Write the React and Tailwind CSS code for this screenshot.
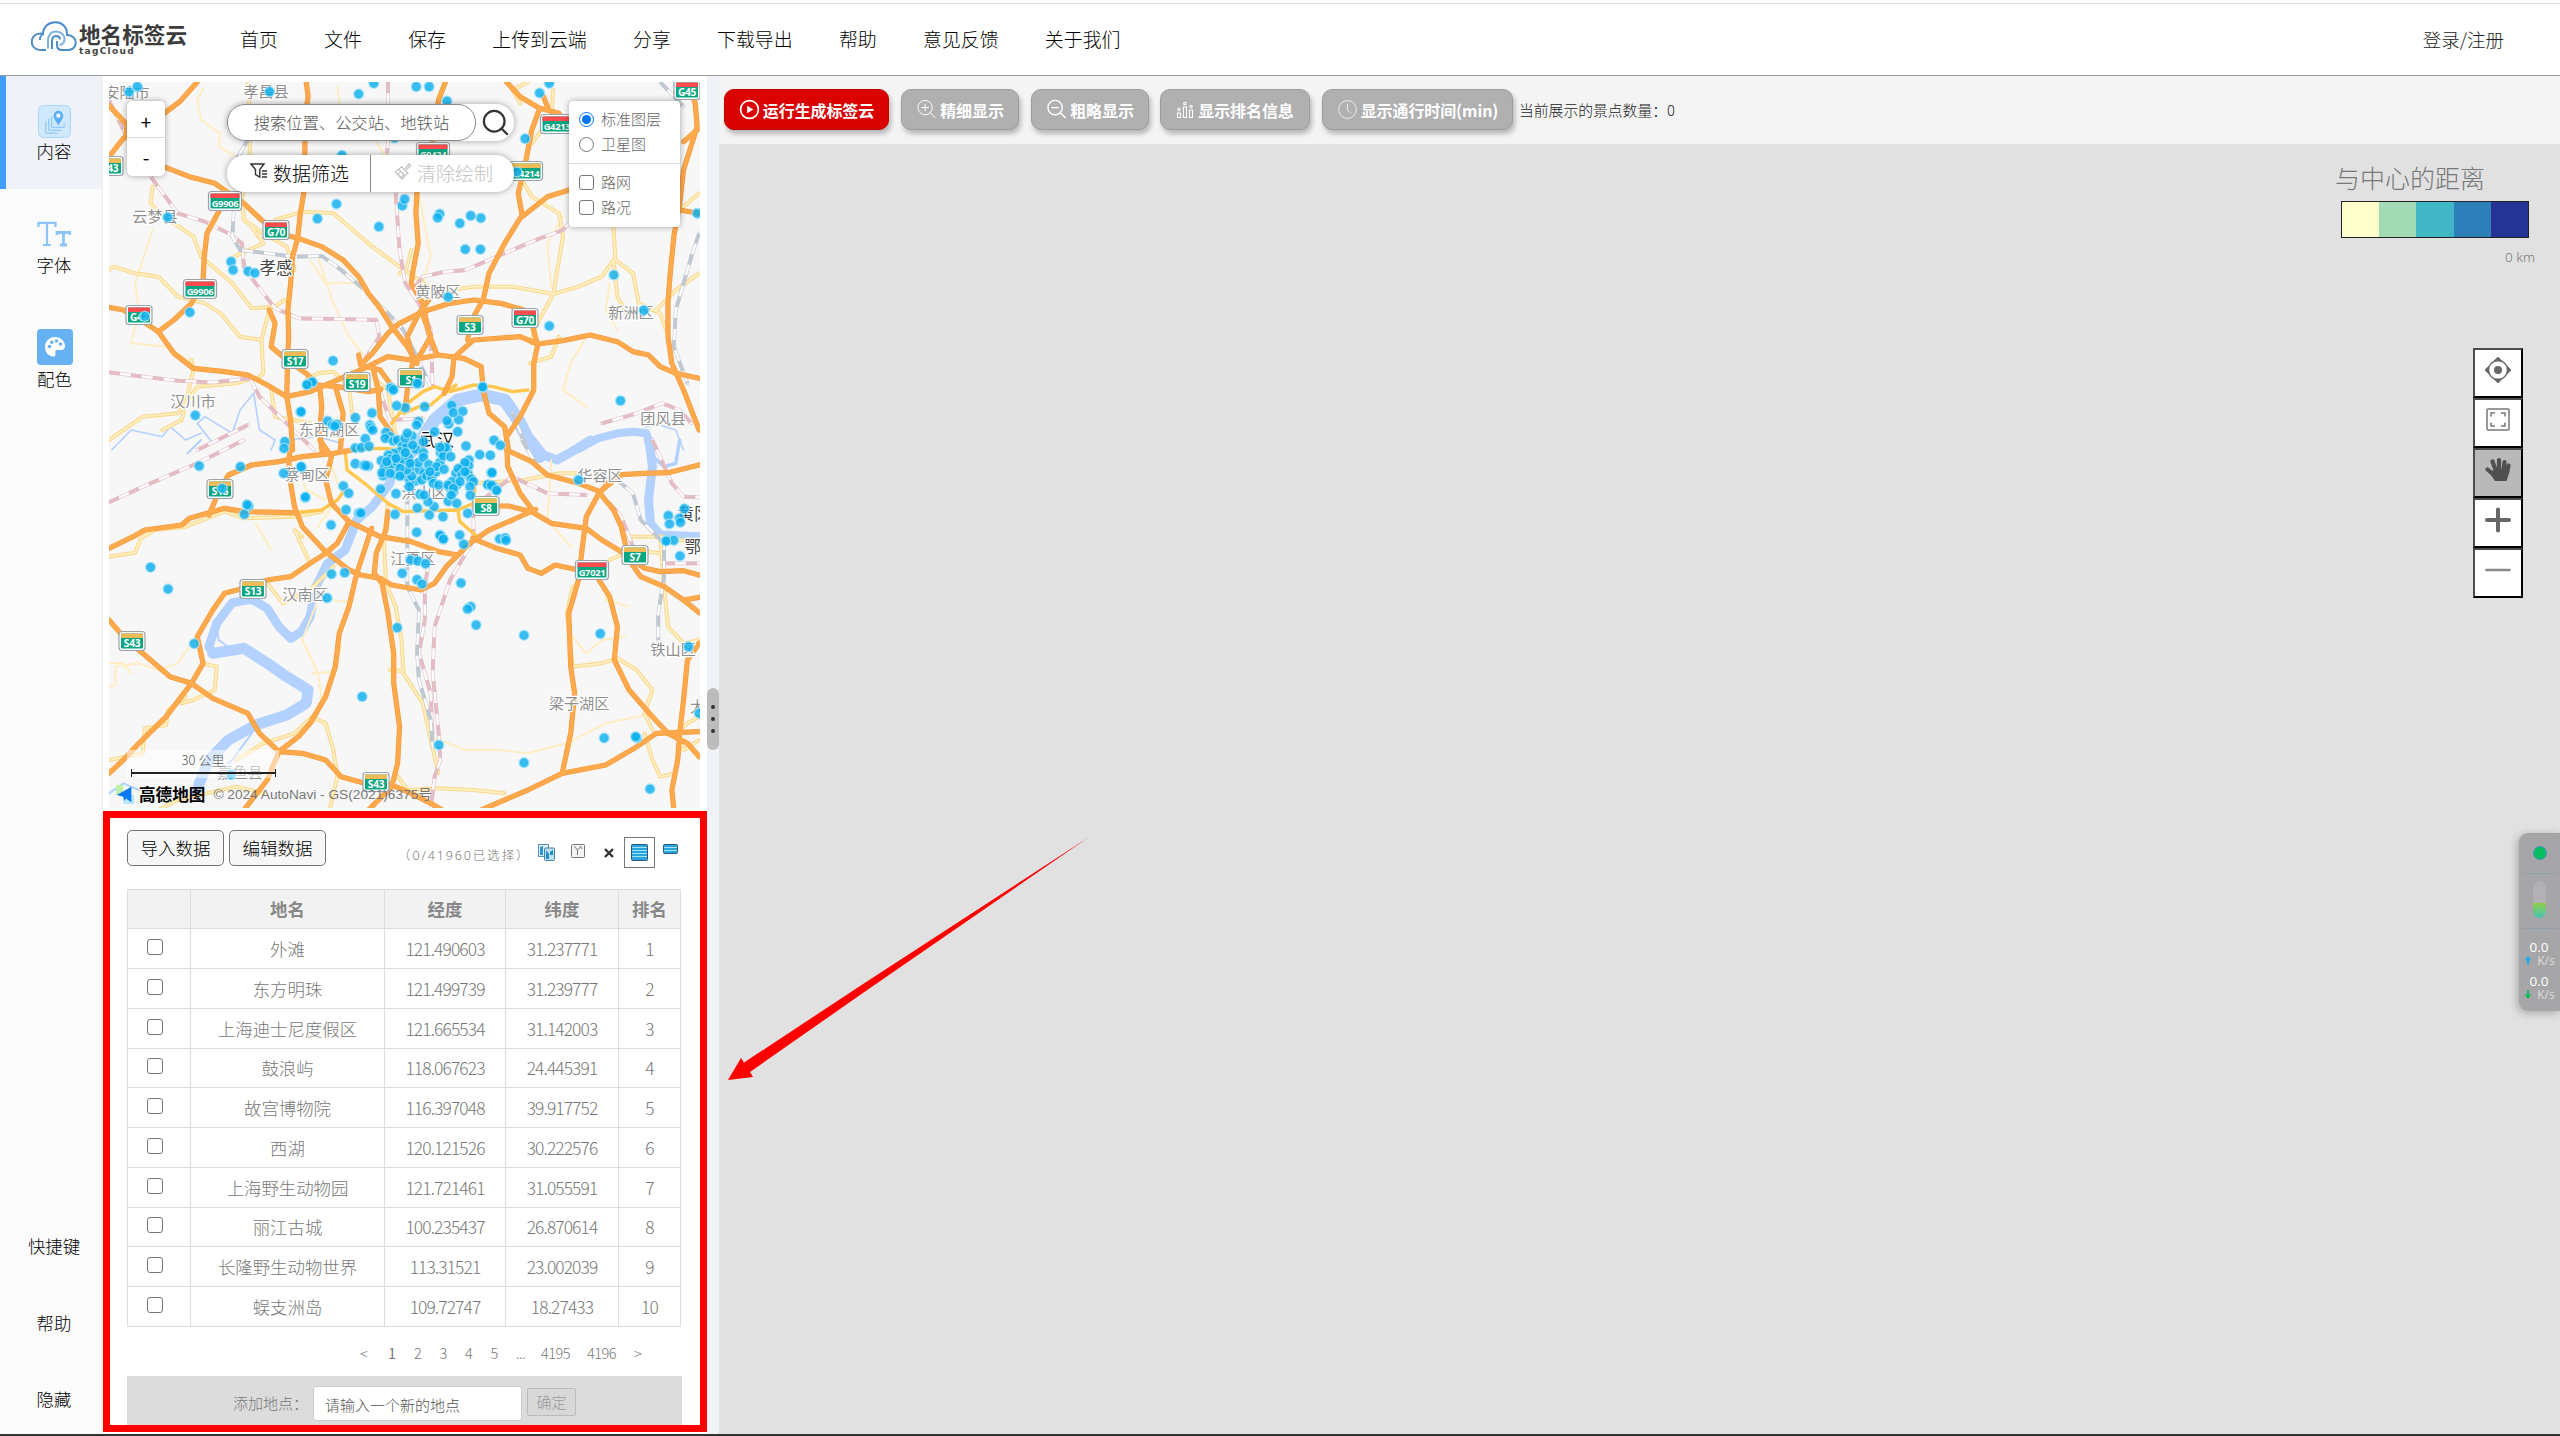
import React from "react";
import { Search } from "lucide-react";

const NORTH = "translate(100 70) scale(0.38903 0.33333)";
const SOUTH = "translate(100 440) scale(0.38903 0.33333)";

const highwaysNorth = [
  "250,36 205,95 165,130 120,180 60,205 40,235 23,262",
  "23,107 50,140 70,165 66,200",
  "168,292 230,320 295,340 370,400 415,450 465,492 510,505 570,530 625,570 665,620 690,670 720,715 750,770 790,830 815,880",
  "305,425 275,490 268,560 265,630 235,700 190,750 150,785 105,750 60,720 23,712",
  "150,785 190,850 240,895 320,905 380,915 430,945 480,980 490,1050 495,1140",
  "530,36 535,80 528,130 525,360 515,430 508,505 495,560 490,640 483,720 485,800 482,880 480,980",
  "480,980 540,965 600,935 670,900 740,860 800,870 870,855 935,865 980,890 985,960 1000,1030 1040,1070 1050,1140",
  "888,36 870,90 860,180 850,250 815,360 812,430 818,520 805,600 800,640 830,700 845,790 865,850",
  "665,855 670,885 700,850 740,790 770,760 830,725 900,700 960,690 1030,700 1090,720 1110,760 1125,825 1115,880 1115,960 1080,1040 1045,1100",
  "845,690 820,730 790,800 805,870 790,960 785,1010",
  "830,735 850,800 815,870",
  "1045,36 1080,80 1130,115 1110,180 1095,270 1075,370 1085,435 1040,520 1000,610 985,690 955,750 945,810",
  "1130,115 1180,130 1200,170",
  "1150,110 1140,80",
  "1085,440 1150,380 1206,360",
  "910,862 960,810 1080,800 1125,822 1190,812 1260,795 1330,815 1370,845 1410,855 1440,890 1480,910 1540,925",
  "1510,36 1530,100 1535,170 1500,300 1490,400 1475,500 1465,620 1460,700 1460,800 1470,880 1500,960 1530,1050 1540,1080",
  "435,720 450,760 440,830 480,870 530,910 560,945 610,950 690,965 722,958",
  "565,950 570,1010 565,1080 570,1140",
  "605,950 625,1030 618,1140",
  "700,885 715,960 720,1040 750,1090",
  "910,860 905,920 885,970",
  "1535,180 1500,215",
  "1490,420 1540,430",
  "670,885 720,900 745,940",
];
const highwaysSouth = [
  "23,325 85,290 115,270 210,255 230,235 320,205 370,215 500,218",
  "280,225 300,170 330,105 390,75 460,65 520,50 600,40 650,30",
  "493,0 485,60 490,130 500,200 520,260 580,335 640,390 670,405 720,415 750,435 825,450 860,430 890,380 950,310 1000,270 1060,240 1120,208",
  "565,0 595,50 580,120 595,190 640,245 720,290 800,305 870,335 920,345",
  "640,245 610,310 580,340 540,370 490,410 430,420 370,445 320,460 290,510 250,590 265,670 235,730 170,830 100,910 60,960 23,1000",
  "23,540 60,590 130,660 180,710 235,730 290,775 380,820 410,880 460,935 520,940 580,960 620,1010 680,1030 740,1030 800,1060 850,1090 880,1110",
  "698,265 680,330 660,400 640,500 615,580 605,680 580,770 540,850 510,890 460,935 430,1020 370,1110",
  "740,215 735,270 710,340 705,400 725,430 740,520 755,640 755,730 770,860 765,970 750,1040 690,1110",
  "1045,0 1048,80 1080,160 1115,215",
  "1045,30 1110,65 1150,105 1230,130 1285,155 1340,104 1400,100 1460,98 1540,75",
  "958,295 1020,325 1080,345 1100,385 1135,400 1170,375 1230,390",
  "970,198 1050,198 1110,215 1160,250 1250,265 1290,300 1340,335 1400,385 1440,395 1500,392 1540,405",
  "1305,130 1280,165 1250,230 1240,320 1230,420 1205,520 1210,680 1220,760 1210,880 1188,1000 1100,1050 980,1110",
  "1285,160 1320,210 1340,260 1360,360 1390,410 1450,440 1500,480 1540,518",
  "1280,415 1310,470 1330,560 1322,660 1360,750 1420,830 1460,880 1510,910 1540,950",
  "1188,1000 1300,975 1380,920 1430,880 1540,875",
  "1540,610 1510,660 1500,780 1490,880 1485,960 1470,1050 1475,1110",
  "1500,480 1540,472",
];
const arterialsNorth = [
  "750,1060 790,1000 830,965 860,950 900,965 960,945 1010,950 1060,965 1100,960",
  "780,1030 820,1010 850,1005 885,970 915,945",
];
const arterialsSouth = [
  "630,30 635,90 680,130 740,190 780,215 860,212 920,210 925,245 965,285",
  "500,218 570,210 610,180 630,150",
  "640,30 720,25 800,30",
  "920,210 960,190 965,120 930,60",
];
const minorNorth = [
  "380,36 385,120 385,250 365,390 370,450 420,490 480,530 500,600",
  "23,600 35,590 90,610 150,620 200,680 270,700 310,730 360,800 415,810 435,720 475,690",
  "135,350 130,400 165,440 240,500 260,560 340,640 390,715 440,710",
  "390,470 420,520 345,560",
  "450,450 520,425 600,430 650,480 700,530 770,590 845,650 900,660 960,650 1060,650 1110,660 1165,672 1230,650 1290,620 1320,570",
  "1165,672 1115,780 1110,820",
  "1165,672 1190,500 1180,430 1110,380 1080,320",
  "1080,100 1060,60 1100,36",
  "1165,60 1160,140 1110,220",
  "1320,470 1325,570 1370,610 1385,700 1440,730 1455,780",
  "1320,570 1330,680 1360,740",
  "1540,610 1480,660 1430,720 1400,720",
  "415,810 420,910 400,930",
  "160,1080 210,1050 240,900 235,870",
  "23,1110 110,1040 200,1030 250,950 350,940 390,925",
  "440,960 450,1040 540,1060",
  "530,930 560,910 600,905 640,950 650,1050",
  "800,540 790,590 770,610",
  "1540,370 1490,420",
  "1105,880 1160,860 1180,800",
  "710,930 740,960 760,1100",
];
const minorSouth = [
  "23,350 90,338 105,295 140,270 220,260 320,215 370,235 500,230 570,215",
  "265,670 300,680 295,750 240,780 210,790",
  "23,960 110,940 115,865 170,855 175,810 220,770",
  "350,960 420,910 500,880 545,830 580,850 600,930 610,1010 590,1110",
  "740,190 730,300 735,430 760,500 775,600 780,700 830,790 850,900 870,1000",
  "745,690 780,693",
  "760,1000 790,1050 870,1045 960,1050 1040,1060",
  "1215,440 1200,520 1215,680 1290,670 1330,655 1380,690 1420,750 1400,820 1420,870",
  "1400,880 1420,960 1440,1010 1480,1000",
  "1310,360 1370,330 1440,340",
  "1440,290 1450,440 1460,560 1500,610 1540,600",
  "960,130 1090,120 1180,100 1230,100",
  "1540,830 1510,850 1480,880 1500,930 1540,900",
  "540,370 500,270 520,290",
  "430,430 470,490 540,450 600,380",
  "1350,290 1440,290 1540,310",
  "150,1110 200,1080 350,1040 420,1060",
];
const hairNorth = [
  "265,55 250,90 260,150 310,190 305,230 380,280",
  "610,50 620,130 690,180 730,250 740,360",
  "135,480 90,640 100,720 80,820 170,830 240,880",
  "820,370 840,500 850,560 830,640",
  "540,570 580,640 665,640",
  "1190,440 1150,520 1160,650",
  "560,560 600,700 640,800 680,860",
  "1250,800 1210,880 1190,960 1250,1010",
  "1310,640 1300,720 1330,780",
];
const hairSouth = [
  "560,480 520,600 560,700 570,780 550,850",
  "23,740 40,735 40,680 100,670 150,690 200,670 240,600",
  "23,670 60,670 80,700",
  "545,700 600,695 620,620",
  "850,890 940,930 1030,930 1100,940 1200,910 1300,850 1400,825",
  "1160,60 1150,240 1210,320",
  "1215,590 1250,640 1290,600 1350,590",
  "600,480 640,488",
  "1300,440 1300,480 1360,500",
  "400,250 440,330",
  "500,50 530,150 580,180",
  "590,60 620,160 560,260",
];
const railPinkNorth = [
  "23,90 60,180 130,320 200,430 270,455 330,490 365,520 370,590 400,640 450,715 510,745 660,748 710,750 718,800 680,870",
  "23,907 110,920 200,932 290,937 385,925 410,980 480,1060 550,1140",
  "740,36 742,190 738,250",
  "760,370 770,540 785,640 820,700 850,780 855,950",
  "810,650 830,620 890,605 940,600 1000,570 1060,540 1120,510 1190,480 1230,430",
  "380,1065 250,1140",
  "710,930 745,1050 830,1045",
  "1290,1060 1380,1030 1445,1000 1490,1020 1520,1060",
];
const railPinkSouth = [
  "23,187 120,135 250,70 370,0",
  "960,300 960,200 1060,110 1150,160 1250,165",
  "965,290 900,420 860,560 855,700 870,870 875,960 860,1010 850,1110",
  "850,330 835,440 835,540 820,640 850,760 855,900",
  "1310,190 1340,230 1370,320",
  "1450,370 1540,370",
  "1420,0 1470,130 1500,170 1540,172",
];
const railGrayNorth = [
  "385,200 355,260 345,400 340,500 360,540 430,550 500,560 570,558 620,600 680,660 740,730 780,780 810,850 850,950",
  "1440,36 1500,110",
  "1540,490 1520,560 1480,720 1475,830 1510,940",
  "1060,1030 1100,1140",
];
const railGraySouth = [
  "1085,0 1120,70",
  "790,160 790,440 820,510 815,640 820,720 850,840 855,920",
  "1330,120 1370,160 1390,240 1450,310 1450,410 1435,520 1435,600",
];
const riverUpper = ["760,60 745,130 700,200 660,240 630,330 585,370 555,440 540,530 518,575 490,595 460,560 430,505 390,478 340,488 300,550 280,620 290,640"];
const riverLower = ["290,640 370,625 430,670 480,710 535,750 530,790 480,825 400,855 330,900 280,960 255,1030 250,1060"];
const riverNorth = ["780,1170 820,1120 860,1050 920,990 980,975 1040,990 1075,1050 1110,1130 1130,1160"];
const riverEast = ["1110,0 1140,45 1175,60 1220,30 1260,0", "1411,0 1420,80 1410,180 1415,250 1440,285 1540,290"];
const riverEastUpper = ["1230,1138 1280,1105 1330,1090 1370,1085 1405,1090 1415,1140"];
const riverBranch = ["1411,40 1450,80 1480,70 1490,0"];
const streamNorth = [
  "30,1140 80,1080 160,1100 180,1070 220,1110 260,1090",
  "395,970 360,1020 340,1090 270,1040 250,1060 290,1120",
  "395,970 410,1080 450,1110 440,1140",
  "480,1110 560,1100 620,1120",
  "1400,1070 1440,1065 1480,1080 1500,1140",
];
const streamSouth = ["300,560 305,600 340,630", "390,880 340,960 300,1000", "23,1060 60,1030 100,1050", "225,40 260,0"];

const Lines = ({ sheet, data, color, width, dash, opacity }) => (
  <g transform={sheet} fill="none" stroke={color} strokeWidth={width} strokeDasharray={dash} opacity={opacity} strokeLinejoin="round" strokeLinecap={dash ? "butt" : "round"}>
    {data.map((p) => (
      <polyline key={p} points={p} vectorEffect="non-scaling-stroke" />
    ))}
  </g>
);

const Rail = ({ sheet, data, color }) => (
  <>
    <Lines sheet={sheet} data={data} color={color} width={3.8} opacity={0.75} />
    <Lines sheet={sheet} data={data} color="#ffffff" width={2.2} />
    <Lines sheet={sheet} data={data} color={color} width={3.8} dash="11 11" />
  </>
);

/* ---------- Points of interest ---------- */
const dotsNorth = [
  [75, 66], [96, 50], [436, 65], [704, 40], [665, 72], [813, 50], [846, 50], [892, 93], [1155, 40], [1130, 69],
  [1093, 206], [622, 256], [757, 204], [1072, 306], [608, 402], [559, 446], [717, 470], [777, 407], [783, 388],
  [873, 432], [868, 443], [925, 460], [953, 437], [979, 444], [939, 538], [978, 538], [1535, 430], [174, 442],
  [337, 575], [342, 600], [381, 604], [398, 609], [895, 681], [1321, 615], [1398, 721], [1155, 768], [231, 727],
  [115, 739], [599, 872], [532, 944], [545, 937], [747, 953], [754, 960], [816, 942], [984, 951], [1338, 992],
  [245, 1036], [516, 1026],
];
const dotsSouth = [
  [255, 78], [361, 80], [518, 82], [517, 80], [472, 100], [475, 5], [473, 25], [314, 145], [382, 198], [378, 194], [371, 223],
  [528, 173], [594, 255], [130, 382], [175, 447], [242, 611], [584, 474], [595, 402], [629, 398], [674, 770], [764, 563],
  [777, 400], [815, 419], [828, 432], [798, 360], [817, 363], [837, 371], [928, 429], [953, 500], [945, 507], [967, 555],
  [1090, 586], [1286, 581], [1513, 620], [1296, 894], [1380, 894], [1377, 890], [1090, 968], [871, 915], [1414, 1047],
  [1540, 820], [1230, 120], [1502, 206], [1461, 227], [1490, 235], [1492, 247], [1464, 252], [1459, 301], [1475, 301],
  [1455, 303], [1491, 348], [337, 1004], [1006, 98], [1000, 135], [1010, 137], [1018, 150], [875, 285], [882, 298],
];
const dotsCity = [
  [33, 125], [67, 36], [51, 44], [303, 54], [310, 59], [382, 40], [578, 51], [404, 110], [346, 113], [320, 107], [485, 106],
  [518, 124], [506, 149], [476, 162], [471, 152], [490, 128], [503, 185], [385, 155], [246, 129], [196, 143], [113, 153],
  [127, 165], [140, 163], [134, 168], [240, 165], [243, 173], [248, 180], [226, 206], [196, 234], [214, 233], [237, 229],
  [196, 281], [222, 286], [235, 288], [228, 287], [434, 185], [366, 198], [400, 215], [288, 187], [300, 200], [286, 205],
  [310, 213], [322, 210], [337, 228], [350, 230], [345, 205], [380, 165], [352, 190], [378, 238], [400, 248], [330, 245],
  [312, 250], [295, 255], [301, 267], [274, 272], [284, 290], [305, 283], [322, 278], [340, 268], [355, 262], [279, 317],
  [276, 308], [315, 313], [344, 317], [368, 290], [388, 300], [385, 278], [400, 262], [402, 310], [416, 284], [376, 333],
  [360, 335], [358, 350], [395, 330], [410, 318], [425, 323], [438, 306], [450, 277], [452, 249], [470, 237], [460, 258],
  [482, 260], [440, 290], [462, 298], [430, 340], [446, 345], [420, 305], [365, 318], [350, 300], [330, 295], [360, 280],
  [528, 228], [612, 211], [631, 226], [569, 254], [601, 256], [606, 308], [537, 270], [520, 288], [536, 287], [525, 278],
  [498, 310], [505, 296], [515, 315], [534, 312], [543, 327], [550, 335], [540, 350], [500, 345], [486, 335], [490, 365],
  [478, 352], [474, 345], [510, 335], [525, 305], [541, 376], [475, 394], [500, 400], [432, 410], [414, 395], [390, 373],
  [382, 414], [418, 435], [459, 440], [533, 430], [402, 375], [272, 357], [318, 371], [315, 433], [160, 348], [176, 370],
  [168, 419], [207, 429], [213, 429], [46, 381], [380, 487], [450, 496], [460, 507], [509, 495], [521, 523], [629, 507],
  [646, 504], [648, 511], [593, 344], [604, 346], [620, 361], [490, 355], [466, 232], [450, 232], [330, 318], [318, 265],
  [290, 275], [300, 310], [346, 248], [368, 225], [484, 375],
];
const dots = [
  ...dotsNorth.map(([x, y]) => [100 + x * 0.389, 70 + y / 3]),
  ...dotsSouth.map(([x, y]) => [100 + x * 0.389, 440 + y / 3]),
  ...dotsCity.map(([x, y]) => [290 + x / 3, 370 + y / 3]),
];

const shields = [
  ["G45", 687, 90, "g"], ["G4213", 557, 124, "g"], ["G0424", 433, 152, "g"], ["S43", 110, 166, "s"], ["G4214", 526, 171, "s"],
  ["G9906", 225, 201, "g"], ["G70", 276, 230, "g"], ["G9906", 200, 289, "g"], ["G42", 139, 315, "g"], ["S3", 470, 325, "s"],
  ["G70", 525, 318, "g"], ["S17", 295, 359, "s"], ["S19", 357, 382, "s"], ["S1", 411, 378, "s"], ["S15", 220, 489, "s"],
  ["S8", 486, 506, "s"], ["S7", 635, 555, "s"], ["G7021", 592, 570, "g"], ["S13", 253, 589, "s"], ["S43", 132, 641, "s"],
  ["S43", 376, 782, "s"],
];
const places = [
  ["安陆市", 127, 92], ["孝昌县", 266, 91], ["云梦县", 155, 216], ["孝感", 276, 268, 1], ["黄陂区", 438, 291], ["新洲区", 631, 312],
  ["汉川市", 193, 401], ["东西湖区", 329, 429], ["团风县", 663, 418], ["武汉", 437, 440, 2], ["蔡甸区", 307, 474], ["华容区", 600, 475],
  ["洪山区", 424, 492], ["江夏区", 413, 558], ["汉南区", 305, 594], ["黄冈", 694, 514, 1], ["鄂州", 701, 547, 1], ["铁山区", 673, 649],
  ["梁子湖区", 579, 703], ["大冶", 705, 706], ["嘉鱼县", 240, 772],
];

const MapDrawing = () => (
  <svg viewBox="109 82 591 726" className="block h-full w-full">
    <rect x="109" y="82" width="591" height="726" fill="#f7f7f7" />
    <Lines sheet={SOUTH} data={riverUpper} color="#b3d1ff" width={9} />
    <Lines sheet={SOUTH} data={riverLower} color="#b3d1ff" width={11} />
    <Lines sheet={NORTH} data={riverNorth} color="#b3d1ff" width={13} />
    <Lines sheet={SOUTH} data={riverEast} color="#b3d1ff" width={9} />
    <Lines sheet={NORTH} data={riverEastUpper} color="#b3d1ff" width={8} />
    <Lines sheet={SOUTH} data={riverBranch} color="#b3d1ff" width={3.5} />
    <Lines sheet={NORTH} data={streamNorth} color="#b3d1ff" width={1.6} />
    <Lines sheet={SOUTH} data={streamSouth} color="#b3d1ff" width={2} />
    <Lines sheet={NORTH} data={hairNorth} color="#ffeec2" width={2} />
    <Lines sheet={SOUTH} data={hairSouth} color="#ffeec2" width={2} />
    <Lines sheet={NORTH} data={minorNorth} color="#fcd98d" width={4} />
    <Lines sheet={SOUTH} data={minorSouth} color="#fcd98d" width={4} />
    <Lines sheet={NORTH} data={minorNorth} color="#fdf0c4" width={1.8} />
    <Lines sheet={SOUTH} data={minorSouth} color="#fdf0c4" width={1.8} />
    <Rail sheet={NORTH} data={railPinkNorth} color="#e3bcc4" />
    <Rail sheet={SOUTH} data={railPinkSouth} color="#e3bcc4" />
    <Rail sheet={NORTH} data={railGrayNorth} color="#c0c8d2" />
    <Rail sheet={SOUTH} data={railGraySouth} color="#c0c8d2" />
    <Lines sheet={NORTH} data={arterialsNorth} color="#ffc74d" width={3.4} />
    <Lines sheet={SOUTH} data={arterialsSouth} color="#ffc74d" width={3.4} />
    <Lines sheet={NORTH} data={highwaysNorth} color="#f39a3a" width={5.2} />
    <Lines sheet={SOUTH} data={highwaysSouth} color="#f39a3a" width={5.2} />
    <Lines sheet={NORTH} data={highwaysNorth} color="#ffa94d" width={4} />
    <Lines sheet={SOUTH} data={highwaysSouth} color="#ffa94d" width={4} />
    {places.map(([name, x, y, rank]) => (
      <text key={name} x={x} y={y + 5.5} textAnchor="middle" fontSize={rank === 2 ? 17 : rank ? 16.5 : 15.2} fill={rank === 2 ? "#111" : rank ? "#444" : "#8f8f8f"} stroke="#fff" strokeWidth="2.4" paintOrder="stroke">
        {name}
      </text>
    ))}
    {shields.map(([name, x, y, kind]) => {
      const w = name.length > 4 ? 31 : name.length > 3 ? 28 : 24;
      return (
        <g key={name + x}>
          <rect x={x - w / 2 - 1} y={y - 9.5} width={w + 2} height={19} rx="3" fill="#fff" stroke="#9aa3ab" strokeWidth="1.2" />
          <rect x={x - w / 2 + 1} y={y - 7.5} width={w - 2} height={15} rx="1" fill="#0aa581" />
          <rect x={x - w / 2 + 1} y={y - 7.5} width={w - 2} height={4.5} fill={kind === "g" ? "#fc4b4f" : "#efbb57"} />
          <text x={x} y={y + 6} textAnchor="middle" fontSize={name.length > 4 ? 9.4 : 10.2} fontWeight="700" fill="#fff" fontFamily="Noto Sans" letterSpacing="-0.3">
            {name}
          </text>
        </g>
      );
    })}
    {dots.map(([x, y], i) => (
      <circle key={i} cx={x} cy={y} r="5" fill="#0baeee" fillOpacity="0.82" stroke="#a5e2fa" strokeOpacity="0.8" strokeWidth="1.3" />
    ))}
  </svg>
);

/* ---------- Header ---------- */
const menu = ["首页", "文件", "保存", "上传到云端", "分享", "下载导出", "帮助", "意见反馈", "关于我们"];

const Logo = () => (
  <div className="flex h-[40px] w-[158px] items-start">
    <svg viewBox="0 0 46 32" className="mt-[1px] h-[32px] w-[46px] shrink-0" fill="none" stroke="#4d8ccb" strokeWidth="2">
      <path d="M15 29H9A8.200 8.200 0 0 1 9 12.500C10 12.400 11 12.600 12 13C12 5.500 18 1.200 24.500 1.200C31 1.200 36 6 36 12.500V14C41 14 44.800 17.500 44.800 21.500C44.800 26 41.500 29 37 29H31C28 29 26 27 26 24V20" />
      <path d="M17 27.500V20.500C17 14 20 10.500 25 10.500C30 10.500 33.500 14 33.500 18C33.500 21 31.500 24 28.500 24" stroke="#7fb0e4" />
      <path d="M12 13C9.500 14.500 8.800 17 9 19M21 28V21C21 17 22.500 15 25 15C27.500 15 29 16.500 29 18.500" />
    </svg>
    <div className="ml-[2px] flex flex-col">
      <span className="text-[21.600px] font-bold leading-[27px] whitespace-nowrap text-[#3c3c3c]">地名标签云</span>
      <span className="-mt-[1px] font-['DejaVu_Sans'] text-[9px] font-bold leading-[10px] tracking-[1.300px] text-[#444]">tagCloud</span>
    </div>
  </div>
);

const Header = () => (
  <header className="mt-[3px] flex h-[73px] shrink-0 items-center border-t border-b border-t-[#ddd] border-b-[#999] bg-white pl-[31px]">
    <Logo />
    <nav className="ml-[51px] flex gap-[46.300px] text-[18.900px] font-light text-black">
      {menu.map((m) => (
        <span key={m} className="whitespace-nowrap">{m}</span>
      ))}
    </nav>
    <span className="mr-[56px] ml-auto text-[18.500px] font-light text-[#222]">登录/注册</span>
  </header>
);

/* ---------- Sidebar ---------- */
const ContentIcon = () => (
  <svg viewBox="0 0 34 34" className="h-[33px] w-[35px]">
    <rect x="0.500" y="0.500" width="33" height="33" rx="5" fill="#cfe8fc" stroke="#a9d5fa" />
    <path d="M8 17V29H20M11 14V26H24M14 12V23H27V19" stroke="#82c1f8" strokeWidth="1" fill="none" />
    <path d="M21 21C18 16 16 14 16 11A5 5 0 0 1 26 11C26 14 24 16 21 21Z" fill="#5db0f6" />
    <circle cx="21" cy="11" r="2.200" fill="#fff" />
  </svg>
);
const PaletteIcon = () => (
  <svg viewBox="0 0 36 36" className="h-[36px] w-[36px]">
    <rect width="36" height="36" rx="4" fill="#66b1f1" />
    <path d="M18 8C12 8 8 12.500 8 18C8 23 11.500 27.500 16.500 27.500C19 27.500 18.500 25 18.300 23.500C18 21.500 20 20.500 22 21C25 21.500 28 20.500 28 17C28 12 23.500 8 18 8Z" fill="#fff" />
    <g fill="#66b1f1">
      <circle cx="12.500" cy="17.500" r="1.700" /><circle cx="14.800" cy="13.200" r="1.700" /><circle cx="19.500" cy="12" r="1.700" /><circle cx="23.500" cy="15" r="1.700" />
    </g>
  </svg>
);
const TextIcon = () => (
  <svg viewBox="0 0 34 26" className="h-[26px] w-[34px]" fill="none" stroke="#8cc5f8" strokeWidth="2.200">
    <path d="M1.500 6V1.800H18.500V6M10 2V24M6 24H14" />
    <path d="M20 14V11.500H33V14M26.500 11.500V24M23 24H30" strokeWidth="2.800" />
  </svg>
);

const Sidebar = () => (
  <aside className="flex w-[103px] shrink-0 flex-col border-r border-[#eee] bg-[#fbfbfc] text-[17.400px] font-light text-black">
    <div className="flex h-[113px] flex-col items-center border-l-[6px] border-[#409eff] bg-[#eff2f7] pt-[29px]">
      <ContentIcon />
      <span className="leading-[26px]">内容</span>
    </div>
    <div className="flex h-[113px] flex-col items-center pt-[32px] pl-[6px]">
      <TextIcon />
      <span className="mt-[5px] leading-[26px]">字体</span>
    </div>
    <div className="flex h-[113px] flex-col items-center pt-[27px] pl-[7px]">
      <PaletteIcon />
      <span className="mt-[1px] leading-[26px]">配色</span>
    </div>
    <div className="mt-auto flex flex-col items-center gap-[50.500px] pb-[22px] pl-[6px] leading-[26px]">
      <span>快捷键</span>
      <span>帮助</span>
      <span>隐藏</span>
    </div>
  </aside>
);

/* ---------- Map panel ---------- */
const FunnelIcon = () => (
  <svg viewBox="0 0 18 16" className="h-[16px] w-[18px] -translate-y-[3px]" fill="none" stroke="#333" strokeWidth="1.400">
    <path d="M1 1H14L9.800 6.500V14L5.500 11.500V6.500Z" />
    <path d="M12 8H17M12 11H17M12 14H17" />
  </svg>
);
const BrushIcon = () => (
  <svg viewBox="0 0 18 18" className="h-[17px] w-[18px] -translate-y-[2px]" fill="none" stroke="#c4c4c4" strokeWidth="1.400">
    <path d="M11 6L15.500 1L17 2.500L12.500 7.500M7.500 4L14 10.500L8 17L1 9.500ZM5 7L11 13.500M4 12L6 10M7 15L9 13" />
  </svg>
);
const Box = () => <span className="block h-[15px] w-[15px] rounded-[3px] border-[1.500px] border-[#767676] bg-white" />;

const MapPanel = () => (
  <section className="relative ml-[6px] h-[726px] w-[591px] overflow-hidden">
    <MapDrawing />
    <div className="absolute top-[19px] left-[18px] flex h-[75px] w-[38px] flex-col rounded-[5px] bg-white text-center text-[19px] leading-[37px] text-black shadow-[0_0_6px_rgba(0,0,0,.35)]">
      <span className="h-[37px] border-b border-[#ddd] pt-[2px]">+</span>
      <span className="h-[37px]">-</span>
    </div>
    <div className="absolute top-[22px] left-[118px] flex h-[37px] w-[287px] rounded-[18px] bg-white shadow-[0_0_6px_rgba(0,0,0,.35)]">
      <div className="flex w-[249px] items-center justify-center rounded-[18px] border-[1.500px] border-[#888] text-[16.300px] font-light whitespace-nowrap text-[#555]">搜索位置、公交站、地铁站</div>
      <Search className="mt-[3px] ml-[4px] h-[31px] w-[31px] text-[#333]" strokeWidth={1.700} />
    </div>
    <div className="absolute top-[73px] left-[118px] flex h-[37px] w-[287px] rounded-[18px] bg-white text-[19px] font-light whitespace-nowrap shadow-[0_0_6px_rgba(0,0,0,.35)]">
      <div className="flex w-[144px] items-center justify-center gap-[5px] border-r border-[#888] pl-[2px] text-black"><FunnelIcon />数据筛选</div>
      <div className="flex flex-1 items-center justify-center gap-[5px] pl-[2px] text-[#c4c4c4]"><BrushIcon />清除绘制</div>
    </div>
    <div className="absolute top-[19px] left-[460px] flex h-[126px] w-[111px] flex-col rounded-[4px] bg-white text-[15px] font-light text-[#666] shadow-[0_0_6px_rgba(0,0,0,.35)]">
      <div className="flex h-[63px] flex-col border-b border-[#ddd] pt-[6px] pl-[10px]">
        <div className="flex h-[25px] items-center gap-[7px]">
          <span className="flex h-[15px] w-[15px] items-center justify-center rounded-full border-[1.500px] border-[#0075ff] bg-white"><span className="h-[9px] w-[9px] rounded-full bg-[#0075ff]" /></span>标准图层
        </div>
        <div className="flex h-[25px] items-center gap-[7px]"><span className="h-[15px] w-[15px] rounded-full border-[1.500px] border-[#767676]" />卫星图</div>
      </div>
      <div className="flex flex-col pt-[6px] pl-[10px]">
        <div className="flex h-[25px] items-center gap-[7px]"><Box />路网</div>
        <div className="flex h-[25px] items-center gap-[7px]"><Box />路况</div>
      </div>
    </div>
    <div className="absolute top-[668px] left-[18px] h-[28px] w-[152px] bg-white/50">
      <div className="pt-[1px] text-center text-[13px] leading-[18px] font-light text-[#555]">30 公里</div>
      <div className="mx-auto flex h-[8px] w-[145px] items-center border-x border-[#222]"><span className="h-[2px] w-full bg-[#222]" /></div>
    </div>
    <div className="absolute top-[701px] left-[6px] flex items-center whitespace-nowrap">
      <svg viewBox="0 0 20 22" className="h-[20px] w-[20px]">
        <path d="M0 1H8V12H0Z" fill="#bff0a5" /><path d="M10 12H20V22H8Z" fill="#b5e6fb" />
        <path d="M1 12L17 3V20L11 16L9 19L8 14Z" fill="#0a79f5" />
      </svg>
      <span className="ml-[4px] text-[16.600px] leading-[20px] font-bold text-black">高德地图</span>
      <span className="ml-[8px] pt-[2px] font-['Liberation_Sans','Noto_Sans_CJK_SC'] text-[13.700px] leading-[20px] text-[#777]">© 2024 AutoNavi - GS(2021)6375号</span>
    </div>
  </section>
);

/* ---------- Data panel ---------- */
const rows = [
  ["外滩", "121.490603", "31.237771"],
  ["东方明珠", "121.499739", "31.239777"],
  ["上海迪士尼度假区", "121.665534", "31.142003"],
  ["鼓浪屿", "118.067623", "24.445391"],
  ["故宫博物院", "116.397048", "39.917752"],
  ["西湖", "120.121526", "30.222576"],
  ["上海野生动物园", "121.721461", "31.055591"],
  ["丽江古城", "100.235437", "26.870614"],
  ["长隆野生动物世界", "113.31521", "23.002039"],
  ["蜈支洲岛", "109.72747", "18.27433"],
];

const TableIcon = ({ small }) => (
  <svg viewBox={small ? "0 0 15 10" : "0 0 17 17"} className={small ? "h-[10px] w-[15px]" : "h-[17px] w-[17px]"}>
    <rect x="0.500" y="0.500" width={small ? 14 : 16} height={small ? 9 : 16} rx="1" fill="#27a6dc" stroke="#2b587c" />
    <path d={small ? "M1 3.500H14M1 6.500H14" : "M1 3.500H16M1 6.500H16M1 9.500H16M1 12.500H16"} stroke="#a5e2f6" />
  </svg>
);
const CopyIcon = () => (
  <svg viewBox="0 0 17 17" className="h-[17px] w-[17px]">
    <rect x="0.500" y="0.500" width="10" height="12" fill="#dff1fb" stroke="#5b8fb5" />
    <path d="M2 3L5 2V11H2Z" fill="#2a95d0" />
    <rect x="6.500" y="4" width="10" height="12.500" rx="1" fill="#bfe3f5" stroke="#4a7fa7" />
    <path d="M8 6L11 10V15H8ZM12 8L15 6V11H12Z" fill="#1f8ecb" />
  </svg>
);
const InvertIcon = () => (
  <svg viewBox="0 0 14 14" className="h-[14px] w-[14px]" fill="none" stroke="#777">
    <rect x="0.500" y="0.500" width="13" height="13" rx="1" fill="#f4f4f4" />
    <path d="M3 2L6.500 6L10 2.500M6.500 6V11M9 2L11 5" />
  </svg>
);

const DataPanel = () => (
  <section className="mt-[3px] flex h-[621px] w-[604px] flex-col overflow-hidden border-[7px] border-[#ff0000] bg-white pl-[17px] font-light">
    <div className="flex h-[71px] items-start gap-[5px] pt-[12px]">
      {["导入数据", "编辑数据"].map((t) => (
        <button key={t} className="flex h-[36px] w-[97px] shrink-0 items-center justify-center rounded-[5px] border border-[#767676] bg-[#f7f7f7] text-[17.500px] font-light text-black">{t}</button>
      ))}
      <span className="mt-[16px] ml-[67px] w-[128px] shrink-0 text-center font-['Noto_Sans','Noto_Sans_CJK_SC'] text-[12.500px] leading-[20px] tracking-[1.900px] whitespace-nowrap text-[#777]">（0/41960已选择）</span>
      <div className="ml-[-5px] flex shrink-0">
        <span className="mt-[14px] ml-[12px]"><CopyIcon /></span>
        <span className="mt-[14px] ml-[16px]"><InvertIcon /></span>
        <svg viewBox="0 0 10 10" className="mt-[18px] ml-[19px] h-[10px] w-[10px]" stroke="#333" strokeWidth="2.400"><path d="M1 1L9 9M9 1L1 9" /></svg>
        <span className="mt-[7px] ml-[10px] flex h-[31px] w-[31px] items-center justify-center border border-[#777]"><TableIcon /></span>
        <span className="mt-[14px] ml-[8px]"><TableIcon small /></span>
      </div>
    </div>
    <table className="w-[553px] table-fixed border-collapse text-center text-[17.400px] text-[#777] [&_td]:border [&_td]:border-[#ddd] [&_th]:border [&_th]:border-[#ddd]">
      <colgroup><col className="w-[63px]" /><col className="w-[194px]" /><col className="w-[121px]" /><col className="w-[113px]" /><col className="w-[62px]" /></colgroup>
      <thead>
        <tr className="h-[39px] bg-[#f2f2f2] text-[#888]"><th /><th>地名</th><th>经度</th><th>纬度</th><th>排名</th></tr>
      </thead>
      <tbody>
        {rows.map(([name, lng, lat], i) => (
          <tr key={name} className={i === 3 || i === 7 ? "h-[39px] leading-[24px]" : "h-[40px] leading-[24px]"}>
            <td><span className="-mt-[4px] ml-[19px] block h-[16px] w-[16px] rounded-[3px] border-[1.500px] border-[#767676]" /></td>
            <td className="whitespace-nowrap">{name}</td>
            <td className="tracking-[-0.900px]">{lng}</td>
            <td className="tracking-[-0.900px]">{lat}</td>
            <td className="tracking-[-0.900px]">{i + 1}</td>
          </tr>
        ))}
      </tbody>
    </table>
    <div className="mt-[14px] flex h-[24px] w-[553px] items-center pl-[233px] text-[14.500px] tracking-[-0.500px] text-[#777]">
      <span className="w-[28px]">&lt;</span>
      <b className="w-[26px]">1</b>
      {["2", "3", "4", "5"].map((n) => <span key={n} className="w-[25.500px]">{n}</span>)}
      <span className="w-[25px]">...</span>
      <span className="w-[46px]">4195</span>
      <span className="w-[47px]">4196</span>
      <span>&gt;</span>
    </div>
    <div className="mt-auto flex h-[49px] w-[555px] shrink-0 items-start bg-[#dcdcdc] pt-[10px] text-[15px] text-[#777]">
      <span className="ml-[106px] w-[80px] leading-[34px] whitespace-nowrap">添加地点：</span>
      <div className="h-[35px] w-[209px] rounded-[3px] border border-[#ccc] bg-white pl-[11px] leading-[35px] text-[#555]">请输入一个新的地点</div>
      <button className="mt-[2px] ml-[5px] h-[28px] w-[49px] rounded-[2px] border border-[#bbb] bg-[#d8d8d8] font-light text-[#999]">确定</button>
    </div>
  </section>
);

/* ---------- Workspace ---------- */
const ZoomGlyph = ({ plus }) => (
  <svg viewBox="0 0 22 22" className="h-[21px] w-[22px]" fill="none" stroke="#fff" strokeWidth={plus ? 1 : 1.400}>
    <circle cx="9" cy="9" r="7.500" /><path d={plus ? "M5 9H13M9 5V13M14.500 14.500L20 20" : "M5 9H13M14.500 14.500L20 20"} />
  </svg>
);
const PlayGlyph = () => (
  <svg viewBox="0 0 22 22" className="h-[21px] w-[21px]" fill="none" stroke="#fff" strokeWidth="1.800">
    <circle cx="11" cy="11" r="9.300" /><path d="M8.500 7L15 11L8.500 15Z" fill="#fff" stroke="none" />
  </svg>
);
const BarsGlyph = () => (
  <svg viewBox="0 0 18 18" className="h-[18px] w-[18px]" fill="none" stroke="#fff" strokeWidth="1.100">
    <path d="M1.500 12H4.500V16.500H1.500ZM7.500 6H10.500V16.500H7.500ZM13.500 9H16.500V16.500H13.500Z" /><circle cx="9" cy="2.500" r="1.300" /><circle cx="15" cy="5.500" r="1.200" /><circle cx="3" cy="8.500" r="1.200" />
  </svg>
);
const ClockGlyph = () => (
  <svg viewBox="0 0 22 22" className="h-[21px] w-[21px]" fill="none" stroke="#eee" strokeWidth="1">
    <circle cx="11" cy="11" r="9.300" /><path d="M11 5V11.500L14.500 15" />
  </svg>
);
const actions = [
  [<PlayGlyph />, "运行生成标签云", "w-[165px] mr-[12px] bg-[#db0202] border-[#c00000] gap-[3px]"],
  [<ZoomGlyph plus />, "精细显示", "w-[118px] mr-[12px] bg-[#b0b0b0] border-[#9c9c9c] gap-[2px]"],
  [<ZoomGlyph />, "粗略显示", "w-[118px] mr-[11px] bg-[#b0b0b0] border-[#9c9c9c] gap-[2px]"],
  [<BarsGlyph />, "显示排名信息", "w-[150px] mr-[12px] bg-[#b0b0b0] border-[#9c9c9c] gap-[4px]"],
  [<ClockGlyph />, "显示通行时间(min)", "w-[191px] mr-[6px] bg-[#b0b0b0] border-[#9c9c9c] gap-[3px]"],
];

const toolGlyphs = [
  <g key="a" fill="none" stroke="#666" strokeWidth="1.300"><circle cx="13" cy="13" r="9.500" /><circle cx="13" cy="13" r="4" fill="#666" stroke="none" /><path d="M10 3.500L13 .5L16 3.500ZM10 22.500L13 25.500L16 22.500ZM3.500 10L.5 13L3.500 16ZM22.500 10L25.500 13L22.500 16Z" fill="#666" /></g>,
  <g key="b" fill="none" stroke="#777" strokeWidth="1.500"><rect x="2" y="2" width="22" height="21" rx="1" /><path d="M6 9.500V6H10M16 6H20V9.500M20 15.500V19H16M10 19H6V15.500" /></g>,
  <g key="c" fill="#505050" stroke="#505050" strokeLinecap="round"><path d="M9 13L24 10.500C24 17 23 20 21.500 24H10C8 21 6 18 4 15Z" stroke="none" /><path d="M2.500 12.500L9 18M7.500 4.500L10.500 13M14 3V12M19.500 5L18.500 13M23.500 8.500L22 16" strokeWidth="4.200" /></g>,
  <path key="d" d="M2 13H24M13 2.500V23.500" stroke="#666" strokeWidth="4" strokeLinecap="round" />,
  <path key="e" d="M1.500 13H24.500" stroke="#888" strokeWidth="2.600" strokeLinecap="round" />,
];

const Speed = ({ up }) => (
  <div className="flex flex-col items-center leading-none text-white">
    <span className="pr-[1px] font-['Open_Sans'] text-[13.500px] leading-[14px]">0.0</span>
    <span className="flex h-[13px] items-center gap-[5px] font-['Open_Sans'] text-[12px] text-[#ddd]">
      <svg viewBox="0 0 8 10" className="h-[9px] w-[8px]" fill={up ? "#1ea7f2" : "#0dbb5f"}>
        {up ? <path d="M4 0L8 5H5V10H3V5H0Z" /> : <path d="M4 10L8 5H5V0H3V5H0Z" />}
      </svg>
      K/s
    </span>
  </div>
);

const Workspace = () => (
  <main className="relative flex min-w-0 flex-1 flex-col bg-[#e1e1e1]">
    <div className="flex h-[68px] shrink-0 items-start bg-[#f4f4f4] pt-[13px] pl-[5px]">
      {actions.map(([icon, label, tone]) => (
        <button key={label} className={`flex h-[41px] shrink-0 items-center justify-center rounded-[10px] border text-[16px] font-bold whitespace-nowrap text-white shadow-[2px_4px_5px_rgba(0,0,0,.25)] ${tone}`}>
          {icon}<span className="tracking-[-0.100px]">{label}</span>
        </button>
      ))}
      <span className="text-[14.800px] leading-[41px] font-light text-[#222]">当前展示的景点数量：0</span>
    </div>
    <div className="flex flex-col items-end pt-[15px]">
      <div className="mr-[75px] text-[25px] leading-[36px] font-light text-[#777]">与中心的距离</div>
      <div className="mt-[6px] mr-[31px] flex h-[37px] w-[188px] border border-[#222]">
        <span className="flex-1 bg-[#ffffcc]" /><span className="flex-1 bg-[#a1dab4]" /><span className="flex-1 bg-[#41b6c4]" /><span className="flex-1 bg-[#2c7fb8]" /><span className="flex-1 bg-[#253494]" />
      </div>
      <div className="mt-[8px] mr-[25px] font-['Noto_Sans'] text-[13.500px] leading-[22px] font-light text-[#777]">0 km</div>
      <div className="mt-[80px] mr-[37px] flex flex-col">
        {toolGlyphs.map((g, i) => (
          <button key={i} className={`flex h-[50px] w-[50px] justify-center border-2 border-t-[#4c4c4c] border-r-black border-b-black border-l-[#4c4c4c] pt-[7px] ${i === 2 ? "bg-[#b9b9b9]" : "bg-white"}`}>
            <svg viewBox="0 0 26 26" className="h-[26px] w-[26px]">{g}</svg>
          </button>
        ))}
      </div>
    </div>
    <svg viewBox="0 0 362 244" className="absolute top-[761px] left-[8px] h-[244px] w-[362px]" fill="#ff0000">
      <path d="M1 243L14 221L17 225.500L133 149L362 0L133 158L23 235L26 240Z" />
    </svg>
    <div className="absolute top-[757px] right-0 flex h-[178px] w-[41px] flex-col items-center rounded-l-[9px] bg-[#a6a6a8] pt-[13px] shadow-[-2px_2px_8px_rgba(0,0,0,.25)]">
      <span className="h-[14px] w-[14px] rounded-full border border-[#4c8fc0] bg-[#07bf5f]" />
      <span className="mt-[13px] h-px w-[34px] bg-[#92a0ab]" />
      <span className="mt-[7px] flex h-[37px] w-[13px] flex-col justify-end overflow-hidden rounded-full bg-[#b2b2b5]">
        <span className="h-[15px] bg-linear-to-b from-[#8fcc3c] to-[#3fc2b0]" />
      </span>
      <span className="mt-[10px] mb-[11px] h-px w-[34px] bg-[#92a0ab]" />
      <Speed up />
      <span className="h-[7px]" />
      <Speed />
    </div>
  </main>
);

export default function App() {
  return (
    <div className="flex h-[1436px] w-[2560px] flex-col overflow-hidden bg-white font-['Noto_Sans_CJK_SC',sans-serif]">
      <Header />
      <div className="flex h-[1358px] shrink-0">
        <Sidebar />
        <div className="flex w-[604px] shrink-0 flex-col pt-[6px]">
          <MapPanel />
          <DataPanel />
        </div>
        <div className="flex w-[12px] shrink-0 items-start bg-[#eff2f7]">
          <div className="mt-[612px] flex h-[62px] w-[12px] flex-col items-center justify-center gap-[8px] rounded-full bg-[#bcbcbc]">
            <i className="h-[4px] w-[4px] rounded-full bg-[#333]" /><i className="h-[4px] w-[4px] rounded-full bg-[#333]" /><i className="h-[4px] w-[4px] rounded-full bg-[#333]" />
          </div>
        </div>
        <Workspace />
      </div>
      <div className="h-[2px] bg-black/80" />
    </div>
  );
}
